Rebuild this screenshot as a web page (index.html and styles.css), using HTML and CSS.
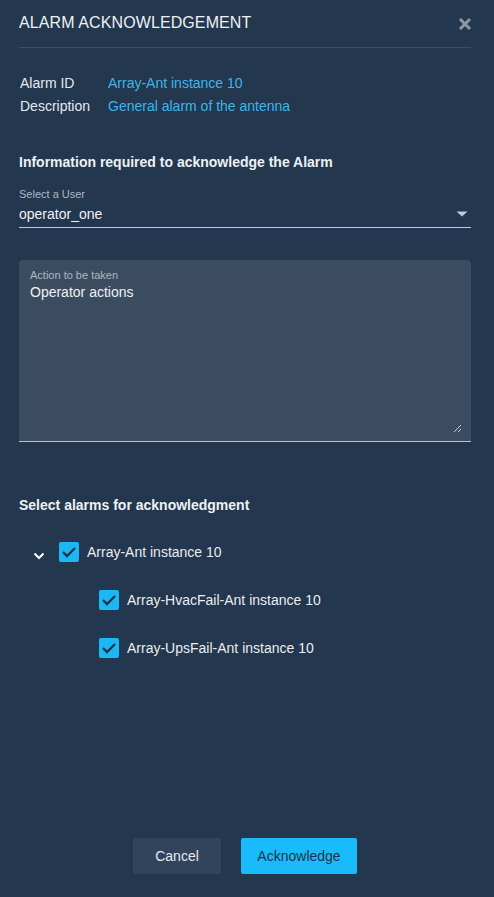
FILE: index.html
```html
<!DOCTYPE html>
<html>
<head>
<meta charset="utf-8">
<link rel="stylesheet" href="styles.css">
</head>
<body>
<div class="dialog">
  <header class="header">
    <h1 class="title">ALARM ACKNOWLEDGEMENT</h1>
    <span class="close" aria-label="Close">
      <svg width="14" height="14" viewBox="0 0 14 14"><path d="M2 2L12 12M12 2L2 12" stroke="#8e98a4" stroke-width="3" stroke-linecap="butt"/></svg>
    </span>
  </header>

  <div class="info">
    <div class="info-row"><span class="info-label">Alarm ID</span><span class="info-value">Array-Ant instance 10</span></div>
    <div class="info-row"><span class="info-label">Description</span><span class="info-value">General alarm of the antenna</span></div>
  </div>

  <h2 class="section-title first">Information required to acknowledge the Alarm</h2>

  <div class="select-field">
    <div class="field-label">Select a User</div>
    <div class="select-value">
      <span>operator_one</span>
      <svg class="caret" width="12" height="6" viewBox="0 0 12 6"><path d="M0.5 0.5H11.5L6 5.5Z" fill="#c3c9cf"/></svg>
    </div>
  </div>

  <div class="textarea-field">
    <div class="field-label">Action to be taken</div>
    <div class="textarea-value">Operator actions</div>
    <svg class="grip" width="9" height="9" viewBox="0 0 9 9"><path d="M8 1L1 8M8 5L5 8" stroke="#c9ced4" stroke-width="1"/></svg>
  </div>

  <h2 class="section-title second">Select alarms for acknowledgment</h2>

  <div class="tree">
    <div class="tree-row">
      <span class="chevron"><svg width="12" height="8" viewBox="0 0 12 8"><path d="M1.5 1.5L6 6L10.5 1.5" fill="none" stroke="#ffffff" stroke-width="2"/></svg></span>
      <span class="checkbox"><svg width="20" height="20" viewBox="0 0 20 20"><path d="M4 10.2L8 14L16 6" fill="none" stroke="#1f3349" stroke-width="2.4"/></svg></span>
      <span class="tree-label">Array-Ant instance 10</span>
    </div>
    <div class="tree-row child">
      <span class="checkbox"><svg width="20" height="20" viewBox="0 0 20 20"><path d="M4 10.2L8 14L16 6" fill="none" stroke="#1f3349" stroke-width="2.4"/></svg></span>
      <span class="tree-label">Array-HvacFail-Ant instance 10</span>
    </div>
    <div class="tree-row child">
      <span class="checkbox"><svg width="20" height="20" viewBox="0 0 20 20"><path d="M4 10.2L8 14L16 6" fill="none" stroke="#1f3349" stroke-width="2.4"/></svg></span>
      <span class="tree-label">Array-UpsFail-Ant instance 10</span>
    </div>
  </div>

  <footer class="footer">
    <button class="btn btn-cancel">Cancel</button>
    <button class="btn btn-primary">Acknowledge</button>
  </footer>
</div>
</body>
</html>
```

FILE: styles.css
```css
html, body {
  margin: 0;
  padding: 0;
  background: #23374f;
}

body {
  font-family: "Liberation Sans", Arial, sans-serif;
  color: #e9ecef;
  font-size: 14px;
}

.dialog {
  min-height: 897px;
  box-sizing: border-box;
  display: flex;
  flex-direction: column;
  padding: 0 23px 23px 19px;
}

.header {
  height: 47px;
  border-bottom: 1px solid #3a4e65;
  display: flex;
  align-items: center;
  justify-content: space-between;
}

.title {
  margin: 0;
  font-size: 16px;
  font-weight: normal;
  color: #eef1f4;
  letter-spacing: 0.1px;
  margin-top: -2px;
}

.close {
  display: flex;
  margin-right: -1px;
}

.info {
  margin-top: 24px;
  padding-left: 1px;
}

.info-row {
  display: flex;
  line-height: 23px;
}

.info-label {
  width: 88px;
  color: #e6e9ec;
}

.info-value {
  color: #3cb6ea;
}

.section-title {
  margin: 0;
  font-size: 14px;
  font-weight: bold;
  line-height: 20px;
  color: #eef1f4;
}

.section-title.first {
  margin-top: 34px;
}

.select-field {
  margin-top: 15px;
}

.field-label {
  font-size: 11px;
  line-height: 14px;
  color: #aeb7c1;
}

.select-value {
  height: 26px;
  display: flex;
  align-items: center;
  justify-content: space-between;
  border-bottom: 1px solid #c7ccd2;
  font-size: 14px;
  color: #eef1f4;
}

.caret {
  margin-right: 3px;
}

.textarea-field {
  position: relative;
  box-sizing: border-box;
  margin-top: 32px;
  height: 182px;
  background: #3b4c60;
  border-radius: 4px 4px 0 0;
  border-bottom: 1px solid #b9c1ca;
  padding: 8px 11px 0;
}

.textarea-value {
  margin-top: 1px;
  line-height: 18px;
  font-size: 14px;
  color: #eef1f4;
}

.grip {
  position: absolute;
  right: 9px;
  bottom: 8px;
}

.section-title.second {
  margin-top: 53px;
}

.tree {
  margin-top: 13px;
}

.tree-row {
  height: 48px;
  display: flex;
  align-items: center;
  padding-left: 8px;
}

.tree-row.child {
  padding-left: 80px;
}

.chevron {
  width: 24px;
  display: flex;
  justify-content: center;
  margin-top: 8px;
  margin-right: 8px;
}

.checkbox {
  width: 20px;
  height: 20px;
  background: #1ab9f6;
  border-radius: 2px;
  display: flex;
  margin-right: 8px;
}

.tree-label {
  color: #e9ecef;
}

.footer {
  margin-top: auto;
  display: flex;
  justify-content: center;
  gap: 20px;
}

.btn {
  height: 36px;
  border: none;
  border-radius: 2px;
  font-family: "Liberation Sans", Arial, sans-serif;
  font-size: 14px;
  padding: 0;
}

.btn-cancel {
  width: 88px;
  background: #30445b;
  color: #e6e9ed;
}

.btn-primary {
  width: 116px;
  background: #19bbfc;
  color: #1f3349;
}
```
